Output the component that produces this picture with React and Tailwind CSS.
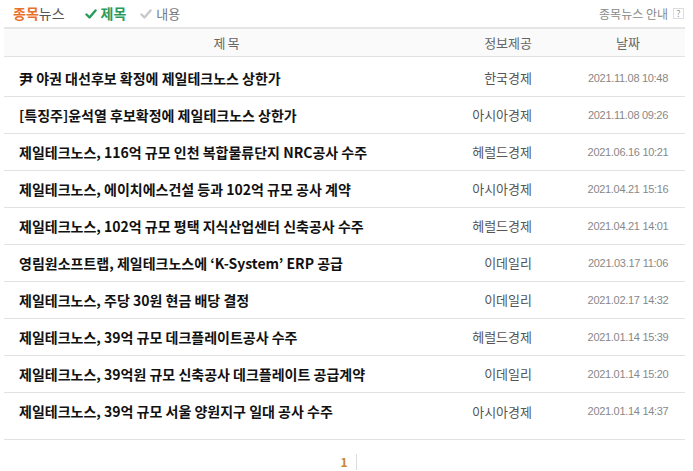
import React from "react";

const news = [
  { title: "尹 야권 대선후보 확정에 제일테크노스 상한가", source: "한국경제", date: "2021.11.08 10:48" },
  { title: "[특징주]윤석열 후보확정에 제일테크노스 상한가", source: "아시아경제", date: "2021.11.08 09:26" },
  { title: "제일테크노스, 116억 규모 인천 복합물류단지 NRC공사 수주", source: "헤럴드경제", date: "2021.06.16 10:21" },
  { title: "제일테크노스, 에이치에스건설 등과 102억 규모 공사 계약", source: "아시아경제", date: "2021.04.21 15:16" },
  { title: "제일테크노스, 102억 규모 평택 지식산업센터 신축공사 수주", source: "헤럴드경제", date: "2021.04.21 14:01" },
  { title: "영림원소프트랩, 제일테크노스에 ‘K-System’ ERP 공급", source: "이데일리", date: "2021.03.17 11:06" },
  { title: "제일테크노스, 주당 30원 현금 배당 결정", source: "이데일리", date: "2021.02.17 14:32" },
  { title: "제일테크노스, 39억 규모 데크플레이트공사 수주", source: "헤럴드경제", date: "2021.01.14 15:39" },
  { title: "제일테크노스, 39억원 규모 신축공사 데크플레이트 공급계약", source: "이데일리", date: "2021.01.14 15:20" },
  { title: "제일테크노스, 39억 규모 서울 양원지구 일대 공사 수주", source: "아시아경제", date: "2021.01.14 14:37" },
];

const CheckMark = ({ className }) => (
  <svg width="12" height="12" viewBox="0 0 12 12" className={className}>
    <path d="M1.5 6.5 L4.5 9.5 L10.5 2.5" fill="none" stroke="currentColor" strokeWidth="2.4" strokeLinecap="round" strokeLinejoin="round" />
  </svg>
);

const App = () => {
  return (
    <div
      className="w-[693px] h-[471px] bg-white overflow-hidden"
      style={{ fontFamily: '"Noto Sans CJK KR", "Noto Sans", sans-serif' }}
    >
      {/* TOP BAR */}
      <div className="h-[27px] flex items-center justify-between pl-[13px] pr-[9px]">
        <div className="flex items-center">
          <span className="text-[14px] font-bold text-[#e8722c]">종목</span>
          <span className="text-[14px] text-[#555]">뉴스</span>
          <span className="ml-[20px] flex items-center gap-[4px] text-[14px] font-bold text-[#2a9a5a]">
            <CheckMark className="text-[#2a9a5a]" />
            제목
          </span>
          <span className="ml-[14px] flex items-center gap-[4px] text-[13px] text-[#777]">
            <CheckMark className="text-[#c8c8c8]" />
            내용
          </span>
        </div>
        <div className="flex items-center gap-[5px]">
          <span className="text-[12px] text-[#8a8a8a]">종목뉴스 안내</span>
          <span className="w-[11px] h-[11px] border border-[#ddd] text-[9px] leading-[9px] text-[#999] flex items-center justify-center">
            ?
          </span>
        </div>
      </div>

      {/* NEWS TABLE */}
      <div className="mx-[4px] w-[681px] border-t-2 border-[#e6e6e6] border-b border-b-[#e2e2e2] pb-[9px]">
        <div className="flex h-[28px] items-center bg-[#fafafa] border-b border-[#e2e2e2] text-[13px] text-[#666]">
          <div className="flex-1 text-center tracking-[2px]">제목</div>
          <div className="w-[120px] text-right pr-[39px]">정보제공</div>
          <div className="w-[114px] text-center">날짜</div>
        </div>

        <div className="pt-[3px]">
          {news.map((n, i) => (
            <div
              key={i}
              className={`flex items-center h-[37px] ${i < news.length - 1 ? "border-b border-[#e2e2e2]" : ""}`}
            >
              <div className="flex-1 pl-[15px] text-[14px] font-bold text-[#111] whitespace-nowrap">{n.title}</div>
              <div className="w-[120px] text-right pr-[39px] text-[13px] text-[#555]">{n.source}</div>
              <div
                className="w-[114px] text-center text-[11px] text-[#888] tracking-[-0.3px]"
                style={{ fontFamily: '"Liberation Sans", sans-serif' }}
              >
                {n.date}
              </div>
            </div>
          ))}
        </div>
      </div>

      {/* PAGINATION */}
      <div className="flex justify-center items-center mt-[14px] pl-[4px]">
        <span className="text-[12px] font-bold text-[#c9882b] pr-[8px] border-r border-[#ddd] leading-[16px]">1</span>
      </div>
    </div>
  );
};

export default App;
